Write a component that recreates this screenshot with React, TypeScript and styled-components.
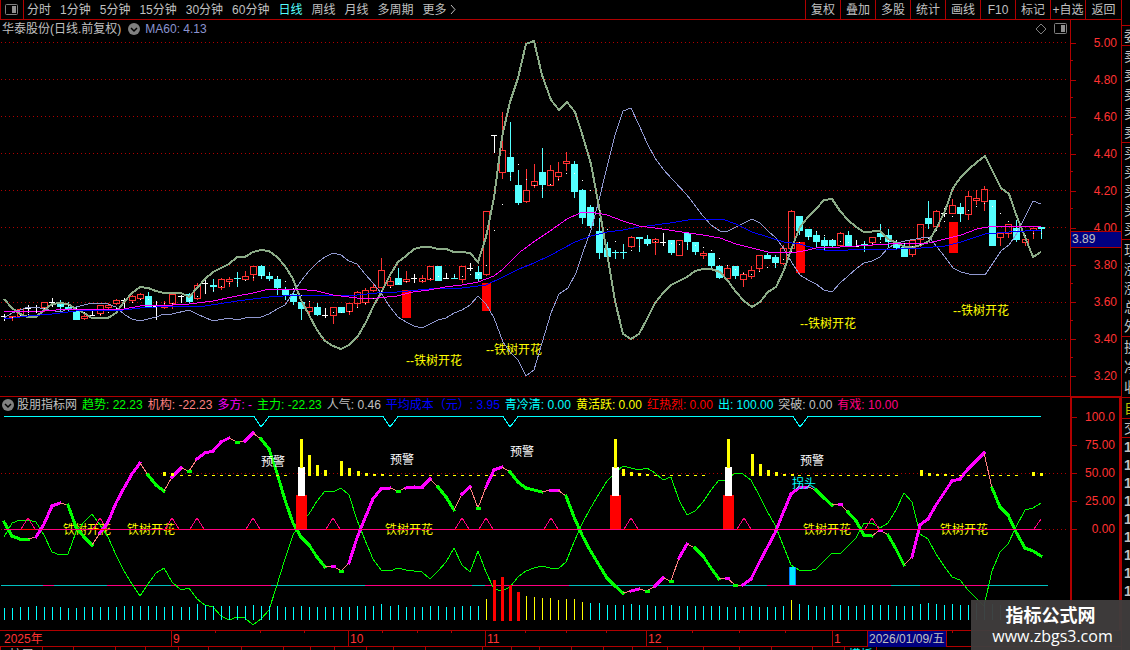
import React from "react";
import styled, { createGlobalStyle } from "styled-components";

const RED = "#b00000";
const LABEL_RED = "#ff3232";
const GREY = "#c0c0c0";
const CYAN = "#54ffff";
const AQUA = "#00ffff";
const PINK = "#ff0080";
const YELLOW = "#ffff00";

const GlobalStyle = createGlobalStyle`
  * { box-sizing: border-box; }
  body {
    margin: 0;
    background: #000;
    color: ${GREY};
    font: 12px/18px "Liberation Sans", "Noto Sans CJK SC", sans-serif;
  }
`;

const Shell = styled.div`
  position: relative;
  display: flex;
  overflow: hidden;
`;

const Terminal = styled.main`
  flex: 1;
  min-width: 0;
`;

const Toolbar = styled.nav`
  display: flex;
  height: 20px;
  border-bottom: 1px solid ${RED};
`;

const PanelToggle = styled.button`
  display: flex;
  align-items: center;
  justify-content: center;
  width: 24px;
  padding: 0 2px 0 0;
  background: none;
  border: 0;
  border-left: 1px solid ${RED};
  border-right: 1px solid ${RED};
`;

const Periods = styled.div`
  flex: 1;
  display: flex;
  gap: 9px;
  padding-left: 3px;
  overflow: hidden;
`;

const Period = styled.button<{ $active?: boolean }>`
  padding: 0;
  background: none;
  border: 0;
  font: inherit;
  white-space: nowrap;
  color: ${(p) => (p.$active ? CYAN : GREY)};
`;

const Tool = styled.button<{ $wide?: boolean }>`
  width: ${(p) => (p.$wide ? 36 : 35)}px;
  padding: 0;
  background: none;
  border: 0;
  border-left: 1px solid ${RED};
  font: inherit;
  white-space: nowrap;
  color: ${GREY};
`;

const Pane = styled.section`
  display: flex;
`;

const Plot = styled.div<{ $divided?: boolean }>`
  flex: 1;
  min-width: 0;
  border-top: ${(p) => (p.$divided ? `1px solid ${RED}` : "0")};
`;

const PaneHeader = styled.header<{ $height: number }>`
  display: flex;
  align-items: center;
  gap: 5px;
  height: ${(p) => p.$height}px;
  padding: 0 3px 0 2px;
  line-height: 16px;
  white-space: nowrap;
  overflow: hidden;
`;

const PaneTitle = styled.div<{ $gap: number }>`
  display: flex;
  align-items: center;
  gap: ${(p) => p.$gap}px;
`;

const Reading = styled.span<{ $color?: string }>`
  color: ${(p) => p.$color ?? GREY};
`;

const HeaderTools = styled.div`
  display: flex;
  gap: 7px;
  margin-left: auto;
`;

const IconButton = styled.button`
  display: flex;
  padding: 0;
  background: none;
  border: 0;
`;

const Chart = styled.svg`
  display: block;
  width: 100%;
  height: auto;
  font-size: 12px;
`;

const Axis = styled.aside<{ $focused?: boolean }>`
  position: relative;
  display: flex;
  flex-direction: column;
  width: 51px;
  padding: ${(p) => (p.$focused ? "5px 0 0" : "4px 0 1px")};
  border: ${(p) => (p.$focused ? `2px solid ${RED}` : "0")};
  border-left: ${(p) => (p.$focused ? 2 : 1)}px solid ${RED};
  border-bottom: 0;
`;

const AxisMark = styled.div<{ $weight: number; $last?: boolean }>`
  position: relative;
  flex: ${(p) => p.$weight};
  display: flex;
  align-items: center;
  justify-content: flex-end;
  padding-right: 4px;
  color: ${LABEL_RED};

  &::before,
  &::after {
    content: "";
    position: absolute;
    left: 0;
    height: 1px;
    background: ${RED};
  }
  &::before {
    top: 50%;
    width: 5px;
  }
  &::after {
    bottom: 0;
    width: ${(p) => (p.$last ? 0 : 2)}px;
  }
`;

const AxisRest = styled.div`
  flex: 87;
`;

const CurrentPrice = styled.div`
  position: absolute;
  top: 56%;
  left: 0;
  right: 0;
  height: 17px;
  padding-left: 1px;
  line-height: 15px;
  background: #000080;
  border-top: 1px solid ${RED};
  border-bottom: 1px solid ${RED};
`;

const DateRow = styled.div`
  position: relative;
  display: grid;
  grid-template-columns: 171fr 177fr 137fr 161fr 186fr 35fr 79px 175fr;
  height: 16px;
  border-top: 1px solid ${RED};
  line-height: 16px;
  color: ${LABEL_RED};
`;

const DateCell = styled.div<{ $first?: boolean; $current?: boolean }>`
  padding-left: ${(p) => (p.$first ? 4 : 1)}px;
  border-left: ${(p) => (p.$first ? "0" : `1px solid ${RED}`)};
  background: ${(p) => (p.$current ? "#000080" : "none")};
  color: ${(p) => (p.$current ? GREY : "inherit")};
  white-space: nowrap;
`;

const Ruler = styled.svg`
  position: absolute;
  top: 0;
  left: 0;
  width: 100%;
  height: 2px;
`;

const TabStrip = styled.div`
  display: flex;
  height: 4px;
  border-top: 1px solid ${RED};
  overflow: hidden;
`;

const StripTab = styled.button<{ $grow: number; $color?: string }>`
  flex: ${(p) => p.$grow} 1 0;
  min-width: 0;
  height: 16px;
  padding: 0;
  background: none;
  border: 0;
  border-left: 1px solid ${RED};
  font: inherit;
  line-height: 14px;
  color: ${(p) => p.$color ?? GREY};
`;

const Side = styled.aside`
  width: 9px;
  padding-top: 25px;
  border-left: 1px solid ${RED};
  overflow: hidden;
  font-size: 14px;
`;

const SideGroup = styled.div<{ $height: number; $color?: string }>`
  display: flex;
  flex-direction: column;
  height: ${(p) => p.$height}px;
  padding-left: 2px;
  border-top: 1px solid ${RED};
  color: ${(p) => p.$color ?? GREY};
`;

const SideRow = styled.div<{ $bold?: boolean }>`
  flex: 1;
  display: flex;
  align-items: center;
  font-weight: ${(p) => (p.$bold ? 700 : 400)};
`;

const Watermark = styled.footer`
  position: absolute;
  right: 0;
  bottom: 0;
  width: 159px;
  height: 50px;
  padding-top: 4px;
  background: rgba(64, 60, 60, 0.96);
  color: #fff;
  text-align: center;
`;

const SiteName = styled.strong`
  display: block;
  font: 700 18px/21px "Noto Sans CJK SC", sans-serif;
`;

const SiteUrl = styled.span`
  display: block;
  padding-left: 4px;
  font: 16px/22px "Open Sans", sans-serif;
`;

/* Horizontal position of the bar with a given index. */
const barX = (i: number) => Math.floor(4.2 + i * 8.038);

/* r: rising (hollow), c: falling (filled), w: unchanged. Then high, body top, body bottom, low. */
type Candle = ["r" | "c" | "w", number, number, number, number];
const candles: Candle[] = [
  ["w", 314, 316, 316, 321], ["r", 316, 316, 318, 321], ["r", 308, 309, 317, 317], ["w", 305, 308, 308, 313],
  ["w", 305, 307, 307, 313], ["r", 302, 302, 308, 312], ["w", 298, 302, 302, 306], ["c", 300, 303, 307, 311],
  ["c", 302, 307, 310, 311], ["c", 307, 311, 320, 320], ["r", 314, 316, 319, 320], ["w", 311, 315, 315, 316],
  ["r", 305, 305, 314, 316], ["r", 303, 305, 308, 309], ["r", 299, 300, 304, 305], ["w", 298, 300, 300, 308],
  ["r", 295, 296, 301, 302], ["r", 293, 294, 299, 300], ["c", 292, 296, 307, 308], ["w", 302, 306, 306, 320],
  ["r", 301, 306, 308, 309], ["r", 293, 294, 304, 309], ["w", 295, 296, 296, 303], ["c", 293, 294, 302, 303],
  ["r", 283, 285, 299, 300], ["w", 280, 283, 283, 294], ["c", 279, 285, 287, 292], ["r", 278, 279, 288, 290],
  ["r", 277, 279, 282, 287], ["c", 272, 278, 279, 287], ["r", 271, 276, 280, 281], ["r", 266, 266, 275, 281],
  ["c", 265, 266, 276, 279], ["c", 272, 276, 279, 281], ["c", 276, 279, 288, 295], ["c", 287, 290, 295, 300],
  ["c", 293, 294, 302, 305], ["c", 300, 302, 309, 320], ["r", 303, 307, 312, 316], ["c", 303, 307, 315, 316],
  ["w", 308, 315, 315, 318], ["r", 307, 307, 316, 324], ["c", 307, 307, 313, 313], ["r", 303, 303, 312, 315],
  ["r", 291, 292, 304, 307], ["r", 288, 290, 303, 305], ["r", 284, 287, 291, 292], ["r", 258, 270, 288, 288],
  ["r", 277, 281, 286, 287], ["c", 268, 278, 285, 285], ["r", 271, 279, 282, 283], ["w", 274, 278, 278, 283],
  ["r", 275, 278, 282, 283], ["r", 266, 266, 280, 281], ["c", 266, 266, 281, 281], ["w", 273, 278, 278, 279],
  ["c", 274, 278, 279, 279], ["r", 266, 266, 280, 283], ["w", 263, 268, 268, 271], ["c", 266, 272, 279, 282],
  ["r", 211, 211, 275, 276], ["w", 135, 135, 135, 153], ["r", 112, 150, 173, 179], ["c", 122, 157, 172, 181],
  ["c", 170, 185, 203, 205], ["r", 169, 190, 202, 203], ["r", 164, 181, 186, 188], ["c", 148, 172, 185, 198],
  ["r", 165, 170, 186, 186], ["r", 162, 172, 177, 181], ["r", 152, 161, 164, 171], ["c", 161, 164, 192, 198],
  ["c", 189, 190, 218, 224], ["c", 205, 207, 226, 228], ["c", 218, 231, 253, 259], ["c", 242, 248, 257, 261],
  ["c", 250, 252, 253, 259], ["c", 244, 252, 253, 259], ["r", 236, 237, 247, 248], ["c", 237, 237, 239, 252],
  ["c", 235, 239, 244, 246], ["r", 238, 239, 243, 255], ["w", 233, 242, 242, 246], ["c", 240, 240, 253, 255],
  ["r", 240, 240, 256, 256], ["c", 233, 233, 242, 250], ["c", 242, 242, 252, 255], ["r", 251, 253, 256, 259],
  ["c", 253, 253, 266, 269], ["c", 265, 266, 278, 279], ["r", 266, 268, 279, 279], ["c", 266, 266, 276, 279],
  ["r", 272, 274, 280, 287], ["r", 266, 270, 277, 279], ["r", 255, 255, 269, 271], ["c", 253, 255, 259, 259],
  ["c", 255, 257, 263, 268], ["r", 245, 248, 264, 265], ["r", 210, 211, 249, 252], ["c", 216, 216, 231, 235],
  ["c", 229, 229, 237, 240], ["c", 231, 235, 242, 248], ["c", 237, 240, 246, 250], ["c", 239, 240, 246, 248],
  ["r", 232, 233, 246, 247], ["c", 231, 235, 246, 246], ["w", 240, 246, 246, 247], ["c", 241, 244, 246, 252],
  ["r", 237, 237, 243, 246], ["c", 224, 233, 237, 240], ["c", 229, 235, 242, 248], ["c", 241, 244, 248, 250],
  ["c", 244, 247, 257, 257], ["r", 239, 240, 255, 257], ["r", 224, 224, 240, 247], ["c", 201, 218, 224, 229],
  ["r", 210, 211, 227, 231], ["w", 208, 213, 213, 217], ["r", 199, 205, 214, 214], ["c", 203, 207, 214, 222],
  ["r", 191, 196, 215, 220], ["r", 190, 198, 201, 205], ["r", 186, 189, 202, 211], ["c", 200, 200, 246, 246],
  ["r", 233, 233, 238, 246], ["r", 224, 224, 234, 238], ["c", 220, 228, 240, 242], ["r", 236, 239, 243, 246],
  ["r", 228, 228, 231, 239], ["c", 227, 227, 229, 239],
];

const bandThick =
  "4,299 12,308 20,314 28,317 36,317 44,310 52,304 60,303 68,304 76,309 84,313 92,318 108,318 116,313 124,302 132,293 140,287 148,288 156,291 164,293 181,293 189,297 197,288 205,279 213,272 221,268 229,264 237,257 245,257 253,252 261,250 269,251 277,257 285,266 293,279 301,300 309,315 317,330 325,341 333,346 341,349 349,345 358,336 366,322 374,305 382,291 390,275 398,262 406,256 414,249 422,247 430,247 438,249 446,249 454,252 462,252 470,253 478,262 486,237 494,198 502,137 510,102 518,78 526,44 534,41 542,75 551,100 559,110 567,102 575,112 583,137 591,164 599,207 607,253 615,301 623,334 631,339 639,334 647,319 655,303 663,293 671,285 679,281 687,277 695,271 703,269 711,269 720,272 728,281 736,292 744,301 752,307 760,302 768,292 776,287 784,270 792,247 800,227 808,217 816,209 824,200 832,199 840,211 848,220 856,227 864,232 880,231 888,239 897,243 905,247 913,247 921,245 929,241 937,227 945,211 953,188 961,177 969,169 977,162 985,156 993,172 1001,188 1009,194 1017,217 1025,237 1033,257 1041,252";

const bandThin =
  "4,318 12,313 28,307 36,307 44,309 60,312 68,309 76,307 84,305 92,303 108,304 116,307 125,315 132,319 140,321 148,319 156,317 164,314 172,314 189,310 197,314 213,321 229,318 237,320 245,318 261,317 269,314 277,309 285,305 293,293 301,281 309,271 317,263 325,257 333,253 341,255 349,261 357,264 365,274 373,283 381,293 390,307 398,317 406,322 414,326 422,328 430,324 438,320 446,318 454,313 462,310 470,305 478,296 486,304 494,318 503,342 510,352 518,360 526,376 534,370 542,343 551,313 559,294 568,288 576,273 583,252 591,230 599,200 607,167 615,135 623,111 631,108 639,125 647,143 655,158 663,169 673,180 687,195 703,216 711,225 720,231 728,231 736,227 744,223 752,219 760,223 768,231 776,238 784,249 792,263 800,275 808,280 816,284 824,290 832,292 840,283 856,269 864,263 872,261 880,257 888,248 897,243 905,241 921,238 929,237 937,247 945,257 953,268 961,272 969,274 985,275 993,263 1001,251 1009,245 1017,233 1025,217 1033,201 1041,204";

const maMagenta =
  "4,311 44,311 68,309 84,309 100,310 124,309 140,306 172,305 189,304 213,301 237,296 253,293 269,289 297,289 317,291 333,295 357,298 377,298 397,296 413,292 429,290 445,287 462,285 478,282 494,276 503,269 520,252 535,241 550,231 567,219 580,213 591,212 607,215 623,221 639,226 655,228 682,232 703,235 720,238 736,244 752,248 768,252 792,253 808,250 816,248 840,247 872,245 888,244 929,243 945,239 961,235 977,229 993,226 1017,226 1041,227";

const maBlue =
  "4,319 28,316 52,314 76,311 124,310 140,308 172,306 205,306 237,301 269,297 297,295 357,295 377,293 397,292 429,289 462,288 486,285 503,277 519,269 534,263 551,255 575,242 591,236 607,232 623,230 639,227 655,225 670,223 694,219 722,219 736,224 752,232 768,237 784,242 800,244 816,249 832,251 864,249 897,249 921,248 945,246 961,242 985,234 1009,232 1041,230";

const signalBlocks = [[402, 290, 28], [482, 283, 28], [796, 242, 31], [949, 222, 31]];
const signalLabels = [[406, 365], [486, 354], [800, 328], [953, 315]];
const priceGrid = [42, 79, 116, 153, 190, 227, 265, 302, 339, 376];

/* Trend values, in thirds of a pixel below the top of the indicator pane. */
const trend = [
  380, 423, 431, 431, 426, 386, 334, 325, 330, 395, 425, 449, 415, 380, 325, 278, 238, 203, 240, 271, 288, 245, 220,
  227, 193, 175, 169, 142, 130, 140, 137, 115, 133, 162, 235, 315, 385, 425, 450, 487, 517, 514, 527, 505, 430, 370,
  313, 281, 279, 287, 280, 277, 276, 253, 277, 305, 346, 296, 276, 338, 276, 225, 217, 230, 261, 279, 286, 292, 286,
  285, 304, 365, 420, 465, 510, 548, 573, 593, 587, 582, 587, 572, 550, 559, 490, 446, 459, 484, 520, 552, 550, 571,
  570, 552, 505, 458, 415, 355, 297, 280, 277, 285, 308, 331, 328, 352, 378, 421, 422, 406, 421, 462, 511, 485, 390,
  373, 330, 293, 259, 252, 222, 198, 174, 278, 336, 360, 410, 460, 468, 482,
];
const trendY = (v: number) => Math.round(395 + v / 3);

const yellowBars: [number, number, number][] = [
  [164, 472, 476], [172, 473, 476], [301, 439, 468], [309, 455, 476], [317, 465, 476], [325, 470, 476],
  [341, 461, 476], [349, 468, 476], [358, 471, 476], [366, 473, 476], [374, 474, 476], [382, 474, 476],
  [615, 439, 468], [623, 469, 476], [631, 472, 476], [639, 473, 476], [647, 474, 476], [728, 439, 468],
  [752, 454, 476], [760, 464, 476], [768, 470, 476], [776, 472, 476], [784, 474, 476], [792, 474, 476],
  [921, 470, 476], [929, 473, 476], [937, 474, 476], [945, 474, 476], [1033, 472, 476], [1041, 473, 476],
];
const dashRuns = [[22, 35], [48, 62], [81, 87], [99, 111], [118, 126]];
const towers = [301, 615, 728];
const pinkRuns = [[43, 54], [107, 149], [171, 271], [365, 472], [485, 569], [767, 891], [920, 987]];
const dips = [261, 390, 510, 800];
const peaks = [28, 100, 172, 197, 253, 333, 462, 486, 551, 631, 744, 872];
const bloomLabels = [63, 127, 385, 803, 940];
const alertLabels = [[261, 466], [390, 464], [510, 456], [800, 465]];

/* Top of each volume bar. */
const volumeTops = [
  608, 608, 607, 607, 606, 607, 607, 607, 608, 608, 607, 607, 607, 607, 607, 606, 606, 606, 606, 606, 607, 606, 607,
  607, 604, 605, 606, 606, 606, 606, 606, 605, 606, 606, 606, 607, 607, 606, 607, 607, 607, 607, 607, 607, 606, 606,
  606, 604, 606, 605, 607, 607, 607, 606, 606, 607, 607, 606, 606, 606, 599, 580, 577, 585, 592, 596, 597, 598, 598,
  600, 599, 599, 602, 603, 603, 605, 605, 605, 604, 605, 605, 606, 606, 605, 606, 606, 606, 606, 606, 606, 607, 607,
  607, 606, 607, 607, 607, 606, 600, 604, 605, 606, 607, 605, 605, 606, 606, 605, 605, 605, 605, 606, 606, 606, 604,
  603, 604, 605, 604, 605, 605, 603, 602, 604, 605, 605, 606, 606, 606, 606,
];
const isYellowVolume = (i: number) => i === 60 || (i > 64 && i < 73) || i === 98;
const isRedVolume = (i: number) => i > 60 && i < 65;

const rulerTicks = [215, 260, 304, 382, 417, 451, 525, 566, 606, 692, 739, 785, 952];

const readings: [string, string?][] = [
  ["趋势: 22.23", "#00ff00"], ["机构: -22.23", "#ff8080"], ["多方: -", "#ff00ff"], ["主力: -22.23", "#00ff00"],
  ["人气: 0.46"], ["平均成本（元）: 3.95", "#0000ff"], ["青冷清: 0.00", AQUA], ["黄活跃: 0.00", YELLOW],
  ["红热烈: 0.00", "#ff0000"], ["出: 100.00", AQUA], ["突破: 0.00"], ["有戏: 10.00", PINK],
];

const stripWidths = [42, 31, 42, 29, 33, 30, 33, 42, 26, 24, 32, 26, 32, 58, 28, 28, 32, 31, 29, 35, 36, 36, 31, 41, 32, 32, 250];

const PanelIcon = () => (
  <svg width="13" height="12" viewBox="0 0 13 12">
    <rect x="0.5" y="0.5" width="12" height="10" rx="1" fill="none" stroke="#808080" />
    <rect x="7" y="2" width="4" height="7" fill="#909090" />
  </svg>
);

const ChevronIcon = () => (
  <svg width="12" height="12" viewBox="0 0 12 12">
    <circle cx="6" cy="6" r="6" fill="#808080" />
    <path d="M3 5l3 3 3-3" fill="none" stroke="#000" strokeWidth="1.5" />
  </svg>
);

const DottedLine = ({ y }: { y: number }) => (
  <line x1="1" x2="1067" y1={y + 0.5} y2={y + 0.5} stroke={RED} strokeDasharray="1 3" />
);

const candleColor = { r: LABEL_RED, c: CYAN, w: "#ffffff" };

function CandleShape({ index }: { index: number }) {
  const [kind, high, top, bottom, low] = candles[index];
  const x = barX(index);
  const fill = candleColor[kind];
  if (kind === "w") {
    return (
      <g fill={fill}>
        <rect x={x} y={high} width="1" height={low - high} />
        <rect x={x - 3} y={top} width="6" height="1" />
      </g>
    );
  }
  return (
    <g fill={fill}>
      {top > high && <rect x={x} y={high} width="1" height={top - high} />}
      {low > bottom && <rect x={x} y={bottom} width="1" height={low - bottom} />}
      {kind === "c" ? (
        <rect x={x - 3} y={top} width="7" height={bottom - top} />
      ) : (
        <rect x={x - 2.5} y={top + 0.5} width="6" height={Math.max(bottom - top - 1, 1)} fill="none" stroke={fill} />
      )}
    </g>
  );
}

function averageY(index: number) {
  const slice = candles.slice(Math.max(0, index - 3), index + 1);
  return Math.round(slice.reduce((sum, c) => sum + (c[2] + c[3]) / 2, 0) / slice.length);
}

const PriceChart = () => (
  <Chart viewBox="0 38 1070 358" shapeRendering="crispEdges" role="img" aria-label="日线">
    {priceGrid.map((y) => <DottedLine key={y} y={y} />)}
    {candles.map((_, i) => <CandleShape key={i} index={i} />)}
    <g fill="#ff0000">
      {signalBlocks.map(([x, y, h]) => <rect key={x} x={x} y={y} width="9" height={h} />)}
    </g>
    <g fill={YELLOW}>
      {signalLabels.map(([x, y]) => <text key={x} x={x} y={y}>--铁树开花</text>)}
    </g>
    <g fill="none">
      <polyline points={bandThin} stroke="#9098d0" />
      <polyline points={bandThick} stroke="#8cac88" strokeWidth="2" />
      <polyline points={maBlue} stroke="#0000ff" />
      <polyline points={maMagenta} stroke="#ff00ff" />
    </g>
    <g fill="#ffffff">
      {candles.map((_, i) => <rect key={i} x={barX(i)} y={averageY(i)} width="1" height="1" />)}
    </g>
  </Chart>
);

function TrendLine() {
  const parts: React.ReactNode[] = [];
  const rises = (i: number) => trend[i] < trend[i - 1];
  for (let i = 0; i < trend.length - 1; i++) {
    const steady = i === 0 || rises(i) === rises(i + 1);
    const color = rises(i + 1) ? "#ff00ff" : "#00ff00";
    const ends = { x1: barX(i), x2: barX(i + 1), y1: trendY(trend[i]), y2: trendY(trend[i + 1]) };
    parts.push(
      <line key={i} {...ends} stroke={steady ? color : "#ff8080"} strokeWidth={steady ? 3 : 1} strokeLinecap="square" />,
    );
    const isolated = i > 1 && !steady && rises(i) !== rises(i - 1);
    if (isolated) {
      parts.push(
        <rect key={`m${i}`} x={barX(i) - 2} y={trendY(trend[i]) - 1} width="5" height="3" fill={rises(i) ? "#ff00ff" : "#00ff00"} />,
      );
    }
  }
  return <g>{parts}</g>;
}

const mirrored = trend.map((v, i) => `${barX(i)},${trendY(806 - v)}`).join(" ");
const ceiling = `M4 416.5${dips.map((x) => `H${x - 7}L${x} 427L${x + 8} 416.5`).join("")}H1041`;

const IndicatorChart = () => (
  <Chart viewBox="0 413 1070 217" shapeRendering="crispEdges" role="img" aria-label="股朋指标网">
    <DottedLine y={473} />
    <DottedLine y={529} />
    <path d={ceiling} fill="none" stroke={AQUA} />
    <rect x="1" y="585" width="1047" height="1" fill="#00c0c0" />
    {pinkRuns.map(([a, b]) => <rect key={a} x={a} y="585" width={b - a} height="1" fill={PINK} />)}
    <g fill={YELLOW}>
      {bloomLabels.map((x) => <text key={x} x={x} y="534">铁树开花</text>)}
    </g>
    <polyline points={mirrored} fill="none" stroke="#00ff00" />
    {volumeTops.map((top, i) =>
      isRedVolume(i) ? (
        <rect key={i} x={barX(i) - 1} y={top} width="3" height={621 - top} fill="#ff0000" />
      ) : (
        <rect key={i} x={barX(i)} y={top} width="1" height={620 - top} fill={isYellowVolume(i) ? YELLOW : AQUA} />
      ),
    )}
    <g fill="none" stroke={PINK}>
      {peaks.map((x) => <path key={x} d={`M${x - 7} 529L${x} 518L${x + 7} 529`} />)}
      <path d="M1034 529L1041 519" />
    </g>
    <TrendLine />
    <rect x="4" y="529" width="1037" height="1" fill={PINK} />
    <g fill="#ff0000">
      {peaks.map((x) => <rect key={x} x={x - 7} y="529" width="14" height="1" />)}
    </g>
    {towers.map((x) => (
      <g key={x}>
        <rect x={x - 5} y="495" width="11" height="34" fill="#ff0000" />
        <rect x={x - 3} y="467" width="7" height="29" fill="#ffffff" />
      </g>
    ))}
    <g fill={YELLOW}>
      {yellowBars.map(([x, a, b]) => <rect key={x} x={x - 1} y={a} width="3" height={b - a} />)}
      {dashRuns.map(([a, b]) =>
        Array.from({ length: b - a + 1 }, (_, k) => <rect key={a + k} x={barX(a + k) - 1} y="475" width="3" height="1" />),
      )}
    </g>
    <rect x="789" y="567" width="7" height="18" fill="#0080ff" />
    <rect x="790" y="567" width="5" height="18" fill="#00e8ff" />
    <g fill="#ffffff">
      {alertLabels.map(([x, y]) => <text key={x} x={x} y={y}>预警</text>)}
    </g>
    <text x="792" y="488" fill={AQUA}>拐头</text>
  </Chart>
);

const SideRows = ({ items }: { items: string }) => (
  <>
    {items.split("").map((c, i) => <SideRow key={i} $bold={c === "1"}>{c}</SideRow>)}
  </>
);

export default function App() {
  return (
    <>
      <GlobalStyle />
      <Shell>
        <Terminal>
          <Toolbar>
            <PanelToggle aria-label="侧栏"><PanelIcon /></PanelToggle>
            <Periods>
              {["分时", "1分钟", "5分钟", "15分钟", "30分钟", "60分钟", "日线", "周线", "月线", "多周期"].map((name) => (
                <Period key={name} $active={name === "日线"}>{name}</Period>
              ))}
              <Period>
                更多{" "}
                <svg width="6" height="9" viewBox="0 0 6 9"><path d="M1 0l4 4.5L1 9" fill="none" stroke={GREY} /></svg>
              </Period>
            </Periods>
            {["复权", "叠加", "多股", "统计", "画线", "F10", "标记", "+自选", "返回"].map((name) => (
              <Tool key={name} $wide={name === "返回"}>{name}</Tool>
            ))}
          </Toolbar>

          <Pane>
            <Plot>
              <PaneHeader $height={18}>
                <PaneTitle $gap={7}>
                  <span>华泰股份(日线.前复权)</span>
                  <IconButton aria-label="展开"><ChevronIcon /></IconButton>
                </PaneTitle>
                <Reading $color="#8c94d0">MA60: 4.13</Reading>
                <HeaderTools>
                  <IconButton aria-label="标注">
                    <svg width="12" height="12" viewBox="0 0 12 12">
                      <path d="M6 1l5 5-5 5-5-5z" fill="none" stroke="#808080" />
                    </svg>
                  </IconButton>
                  <IconButton aria-label="面板"><PanelIcon /></IconButton>
                </HeaderTools>
              </PaneHeader>
              <PriceChart />
            </Plot>
            <Axis>
              {["5.00", "4.80", "4.60", "4.40", "4.20", "4.00", "3.80", "3.60", "3.40", "3.20"].map((v) => (
                <AxisMark key={v} $weight={1} $last={v === "3.20"}>{v}</AxisMark>
              ))}
              <CurrentPrice>3.89</CurrentPrice>
            </Axis>
          </Pane>

          <Pane>
            <Plot $divided>
              <PaneHeader $height={16}>
                <PaneTitle $gap={3}>
                  <IconButton aria-label="展开"><ChevronIcon /></IconButton>
                  <span>股朋指标网</span>
                </PaneTitle>
                {readings.map(([text, color]) => <Reading key={text} $color={color}>{text}</Reading>)}
              </PaneHeader>
              <IndicatorChart />
            </Plot>
            <Axis $focused>
              {["100.0", "75.00", "50.00", "25.00", "0.00"].map((v) => (
                <AxisMark key={v} $weight={28} $last>{v}</AxisMark>
              ))}
              <AxisRest />
            </Axis>
          </Pane>

          <DateRow>
            <DateCell $first>2025年</DateCell>
            <DateCell>9</DateCell>
            <DateCell>10</DateCell>
            <DateCell>11</DateCell>
            <DateCell>12</DateCell>
            <DateCell>1</DateCell>
            <DateCell $current>2026/01/09/五</DateCell>
            <DateCell />
            <Ruler viewBox="0 0 1121 2" preserveAspectRatio="none" aria-hidden="true">
              {rulerTicks.map((x) => <rect key={x} x={x} y="0" width="1" height="2" fill={RED} />)}
            </Ruler>
          </DateRow>
          <TabStrip>
            {stripWidths.map((w, i) => (
              <StripTab key={i} $grow={w} $color={i === 25 ? AQUA : undefined}>
                {i === 0 ? "扩展" : i === 25 ? "模板" : ""}
              </StripTab>
            ))}
          </TabStrip>
        </Terminal>

        <Side>
          <SideGroup $height={20}><SideRows items="委" /></SideGroup>
          <SideGroup $height={97}><SideRows items="卖卖卖卖卖" /></SideGroup>
          <SideGroup $height={97}><SideRows items="买买买买买" /></SideGroup>
          <SideGroup $height={97}><SideRows items="现涨涨总外" /></SideGroup>
          <SideGroup $height={61}><SideRows items="换净收" /></SideGroup>
          <SideGroup $height={21} $color="#c0c000"><SideRows items="自" /></SideGroup>
          <SideGroup $height={19}><SideRows items="交" /></SideGroup>
          <SideGroup $height={163}><SideRows items="111111111" /></SideGroup>
        </Side>

        <Watermark>
          <SiteName>指标公式网</SiteName>
          <SiteUrl>www.zbgs3.com</SiteUrl>
        </Watermark>
      </Shell>
    </>
  );
}
